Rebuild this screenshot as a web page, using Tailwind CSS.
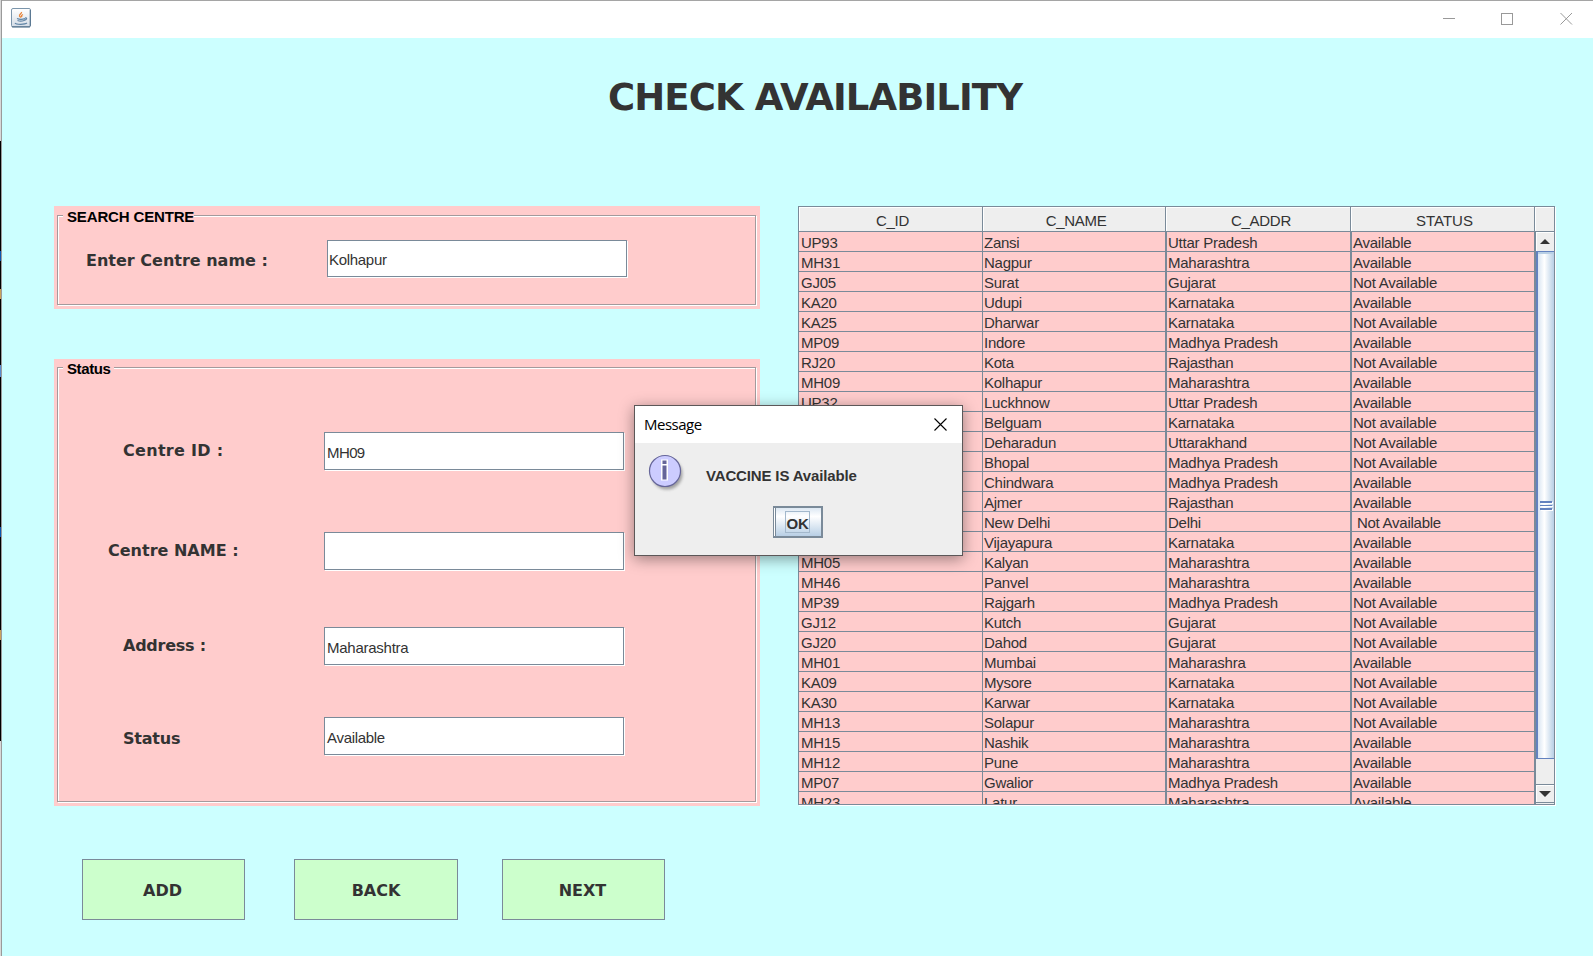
<!DOCTYPE html>
<html lang="en">
<head>
<meta charset="utf-8">
<title>Check Availability</title>
<script src="https://cdn.jsdelivr.net/npm/@tailwindcss/browser@4"></script>
</head>
<body class="relative flex h-[956px] w-[1593px] overflow-hidden bg-[#ccffff] font-['Liberation_Sans',sans-serif] text-[15px] leading-[17px] text-[#333333]">
<!-- sliver of the window behind -->
<div class="flex h-full w-0.5 shrink-0 flex-col border-r border-[#9a9a9a] bg-[#d8d8d8]">
  <div class="h-[141px]"></div>
  <div class="h-[110px] bg-black"></div><div class="h-2.5 bg-[#0a58b0]"></div>
  <div class="h-7 bg-black"></div><div class="h-2.5 bg-[#c9a25c]"></div>
  <div class="h-[66px] bg-black"></div><div class="h-3 bg-[#5a8ed0]"></div>
  <div class="h-[150px] bg-black"></div><div class="h-2.5 bg-[#0a58b0]"></div>
  <div class="h-[93px] bg-black"></div><div class="h-2.5 bg-[#c9a25c]"></div>
  <div class="h-[101px] bg-black"></div>
</div>

<div class="flex w-[1591px] shrink-0 flex-col">
  <header class="flex h-[38px] shrink-0 items-center justify-between border-t border-[#a5a5a5] bg-white pr-5 pb-[3px] pl-[9px]">
    <svg class="h-5 w-5" viewBox="0 0 20 20" fill="none">
      <defs><linearGradient id="jb" x2="0" y2="1"><stop stop-color="#fff"/><stop offset="1" stop-color="#d3dce6"/></linearGradient></defs>
      <rect x=".5" y=".5" width="19" height="18.5" rx="1.5" fill="url(#jb)" stroke="#7b95ab"/>
      <path d="M1 18.8h18M19.2 2v16" stroke="#4d6d88"/>
      <path d="M10.500 4c.5 1.500-2.500 2-2 4 .3.800 1 1 1.500 1.500M12 6.500c-1.500 .8-2 1.200-1 2.500" stroke="#e8853a" stroke-width="1.300"/>
      <path d="M6 10.500c2 .8 6 .8 8 0M6.500 12.500c2 .8 4.500 .8 6.500 0M14 10c2.500-.5 2 1.800-1 2.300M4 15c1 1.700 10 1.700 12 0" stroke="#5f84a5" stroke-width="1.200"/>
    </svg>
    <svg class="h-[14px] w-[130px]" viewBox="0 0 130 14" fill="none" stroke="#999999">
      <path d="M0 7.500h12"/><rect x="58.500" y="2.500" width="11" height="11"/><path d="M117.500 2l11.500 11.500M129 2l-11.500 11.500"/>
    </svg>
  </header>

  <h1 class="mt-[38px] ml-[606px] h-[130px] font-['DejaVu_Sans',sans-serif] text-[37px] leading-[44px] font-bold tracking-[-0.9px] whitespace-nowrap">CHECK AVAILABILITY</h1>

  <main class="flex pl-[52px]">
    <div class="w-[706px] shrink-0">
      <section class="h-[103px] bg-[#ffcccc] px-[3px] pt-[9px]">
        <fieldset class="relative h-[90px] w-[699px] border border-[#a39a9c] shadow-[1px_1px_0_#fff,inset_1px_1px_0_#fff]">
          <h2 class="absolute -top-[7px] left-[5px] bg-[#ffcccc] pl-1 leading-[16px] font-bold tracking-[-0.15px] text-black">SEARCH CENTRE</h2>
          <div class="flex pt-6 pl-7">
            <label class="w-[241px] pt-[12px] font-['DejaVu_Sans',sans-serif] text-[16px] font-bold whitespace-pre">Enter Centre name :</label>
            <div class="h-[37px] w-[300px] border border-[#7a8a99] bg-white pt-[10px] pl-px tracking-[-0.3px] shadow-[1px_1px_0_#fff]">Kolhapur</div>
          </div>
        </fieldset>
      </section>

      <section class="mt-[50px] h-[447px] bg-[#ffcccc] px-[3px] pt-2">
        <fieldset class="relative h-[435px] w-[699px] border border-[#a39a9c] shadow-[1px_1px_0_#fff,inset_1px_1px_0_#fff]">
          <h2 class="absolute -top-[7px] left-[5px] bg-[#ffcccc] px-1 leading-[16px] font-bold tracking-[-0.4px] text-black">Status</h2>
          <div class="flex h-[164px] pt-16 pl-[65px]">
            <label class="w-[201px] pt-[10px] font-['DejaVu_Sans',sans-serif] text-[16px] font-bold tracking-[0.3px]">Centre ID :</label>
            <div class="h-[38px] w-[300px] border border-[#7a8a99] bg-white pt-[11px] pl-0.5 tracking-[-0.6px] shadow-[1px_1px_0_#fff]">MH09</div>
          </div>
          <div class="flex h-[95px] pl-[50px]">
            <label class="w-[216px] pt-[10px] font-['DejaVu_Sans',sans-serif] text-[16px] font-bold">Centre NAME :</label>
            <div class="h-[38px] w-[300px] border border-[#7a8a99] bg-white shadow-[1px_1px_0_#fff]"></div>
          </div>
          <div class="flex h-[90px] pl-[65px]">
            <label class="w-[201px] pt-[10px] font-['DejaVu_Sans',sans-serif] text-[16px] font-bold tracking-[-0.25px]">Address :</label>
            <div class="h-[38px] w-[300px] border border-[#7a8a99] bg-white pt-[11px] pl-0.5 tracking-[-0.25px] shadow-[1px_1px_0_#fff]">Maharashtra</div>
          </div>
          <div class="flex pl-[65px]">
            <label class="w-[201px] pt-[13px] font-['DejaVu_Sans',sans-serif] text-[16px] font-bold tracking-[-0.2px]">Status</label>
            <div class="h-[38px] w-[300px] border border-[#7a8a99] bg-white pt-[11px] pl-0.5 tracking-[-0.3px] shadow-[1px_1px_0_#fff]">Available</div>
          </div>
        </fieldset>
      </section>

      <div class="mt-[53px] ml-7 flex font-['DejaVu_Sans',sans-serif] text-[16px]">
        <button class="h-[61px] w-[163px] border border-[#7a8a99] bg-[#ccffcc] pt-0.5 pr-0.5 font-bold">ADD</button>
        <button class="ml-[49px] h-[61px] w-[164px] border border-[#7a8a99] bg-[#ccffcc] pt-0.5 font-bold">BACK</button>
        <button class="ml-11 h-[61px] w-[163px] border border-[#7a8a99] bg-[#ccffcc] pt-0.5 pr-0.5 font-bold">NEXT</button>
      </div>
    </div>

    <div class="ml-[38px] flex h-[599px] w-[757px] flex-col overflow-hidden border border-[#7a8a99] shadow-[1px_1px_0_#fff]">
      <div class="flex h-[25px] shrink-0 border-b border-[#7a8a99] bg-[#eeeeee] text-center leading-[27px] tracking-[-0.3px]">
        <div class="w-[184px] border-r border-[#7a8a99] pl-1 shadow-[inset_1px_1px_0_#fff]">C_ID</div>
        <div class="w-[183px] border-r border-[#7a8a99] pl-1 shadow-[inset_1px_1px_0_#fff]">C_NAME</div>
        <div class="w-[185px] border-r border-[#7a8a99] pl-1.5 shadow-[inset_1px_1px_0_#fff]">C_ADDR</div>
        <div class="w-[184px] border-r border-[#7a8a99] pl-1 tracking-normal shadow-[inset_1px_1px_0_#fff]">STATUS</div>
        <div class="w-[19px] shadow-[inset_1px_1px_0_#fff]"></div>
      </div>
      <div class="flex min-h-0 flex-1">
        <div id="rows" class="h-full w-[736px] overflow-hidden border-r border-[#7a8a99] bg-[#ffcccc] tracking-[-0.25px]"></div>
        <div class="flex w-[19px] flex-col border-l border-[#7a8a99] bg-[#eeeeee]">
          <div class="flex h-[19px] items-center justify-center pr-px shadow-[inset_1px_1px_0_#fff]"><svg class="h-[5px] w-[10px]" viewBox="0 0 10 5"><path d="M5 0l5 5H0z" fill="#333"/></svg></div>
          <div class="flex h-[508px] items-center border border-r-0 border-l-2 border-[#6382bf] bg-linear-to-r from-[#d9e5f2] via-white via-40% to-[#b8cfe5] pl-0.5 shadow-[inset_0_2px_0_#b8cfe5]">
            <div class="flex w-3 flex-col gap-0.5"><i class="h-0.5 bg-[#6382bf] shadow-[1px_1px_0_#fff]"></i><i class="h-px bg-[#6382bf] shadow-[1px_1px_0_#fff]"></i><i class="h-0.5 bg-[#6382bf] shadow-[1px_1px_0_#fff]"></i></div>
          </div>
          <div class="h-[25px]"></div>
          <div class="flex h-[19px] items-center justify-center border-y border-[#7a8a99] pr-px shadow-[inset_1px_1px_0_#fff]"><svg class="h-[6px] w-[12px]" viewBox="0 0 12 6"><path d="M0 0h12L6 6z" fill="#333"/></svg></div>
        </div>
      </div>
    </div>
  </main>
</div>

<!-- message dialog -->
<div class="absolute top-[405px] left-[634px] flex h-[151px] w-[329px] flex-col border border-[#5c5758] bg-[#eeeeee] shadow-[0_3px_14px_rgba(0,0,0,0.4)]">
  <div class="flex h-[37px] shrink-0 items-center justify-between bg-white pr-[15px] pl-[9px] text-black">
    <span class="font-['Open_Sans',sans-serif] text-[15px] tracking-[-0.5px]">Message</span>
    <svg class="h-[13px] w-[13px]" viewBox="0 0 13 13" fill="none" stroke="#000" stroke-width="1.100"><path d="M.5 .5l12 12M12.500 .5l-12 12"/></svg>
  </div>
  <div class="flex pt-[10px] pl-[12px]">
    <svg class="h-10 w-10 shrink-0" viewBox="0 0 40 40">
      <defs><filter id="sh" x="-20%" y="-20%" width="150%" height="150%"><feGaussianBlur stdDeviation="1.700"/></filter></defs>
      <circle cx="20" cy="21" r="15.500" fill="#777" opacity=".65" filter="url(#sh)"/>
      <circle cx="18" cy="18" r="15.500" fill="#ccccff" stroke="#666699" stroke-width="1.200"/>
      <path d="M14 6.500h7v21h-7z" fill="#fff"/><path d="M15.500 7.500h4v3.500h-4zM15.500 12.500h4v14h-4z" fill="#666699"/>
    </svg>
    <p class="pt-[14px] pl-[19px] font-bold tracking-[-0.15px]">VACCINE IS Available</p>
  </div>
  <button class="mt-[13px] ml-[138px] flex h-8 w-[50px] items-center justify-center border-2 border-l border-[#7a8a99] bg-linear-to-b from-[#dde8f3] via-white via-30% to-[#b8cfe5] font-bold shadow-[inset_1px_0_0_#fff,inset_2px_0_0_#7a8a99]"><span class="h-[22px] w-[25px] border border-[#a3b8cc] pt-[3px] text-center leading-[17px] tracking-[-0.3px]">OK</span></button>
</div>

<script>
const rows = `UP93|Zansi|Uttar Pradesh|Available
MH31|Nagpur|Maharashtra|Available
GJ05|Surat|Gujarat|Not Available
KA20|Udupi|Karnataka|Available
KA25|Dharwar|Karnataka|Not Available
MP09|Indore|Madhya Pradesh|Available
RJ20|Kota|Rajasthan|Not Available
MH09|Kolhapur|Maharashtra|Available
UP32|Luckhnow|Uttar Pradesh|Available
|Belguam|Karnataka|Not available
|Deharadun|Uttarakhand|Not Available
|Bhopal|Madhya Pradesh|Not Available
|Chindwara|Madhya Pradesh|Available
|Ajmer|Rajasthan|Available
|New Delhi|Delhi| Not Available
|Vijayapura|Karnataka|Available
MH05|Kalyan|Maharashtra|Available
MH46|Panvel|Maharashtra|Available
MP39|Rajgarh|Madhya Pradesh|Not Available
GJ12|Kutch|Gujarat|Not Available
GJ20|Dahod|Gujarat|Not Available
MH01|Mumbai|Maharashra|Available
KA09|Mysore|Karnataka|Not Available
KA30|Karwar|Karnataka|Not Available
MH13|Solapur|Maharashtra|Not Available
MH15|Nashik|Maharashtra|Available
MH12|Pune|Maharashtra|Available
MP07|Gwalior|Madhya Pradesh|Available
MH23|Latur|Maharashtra|Available`.split("\n");
const cols = [
  "w-[184px] border-r border-[#7a8a99] pl-0.5",
  "w-[184px] border-r-2 border-[#7a8a99] pl-px",
  "w-[185px] border-r-2 border-[#7a8a99] pl-px",
  "w-[182px] pl-px"
];
document.getElementById("rows").innerHTML = rows.map(r =>
  `<div class="flex h-5 border-b border-[#7a8a99] leading-[22px] whitespace-pre">${r.split("|").map((c, i) => `<div class="${cols[i]}">${c}</div>`).join("")}</div>`).join("");
</script>
</body>
</html>
